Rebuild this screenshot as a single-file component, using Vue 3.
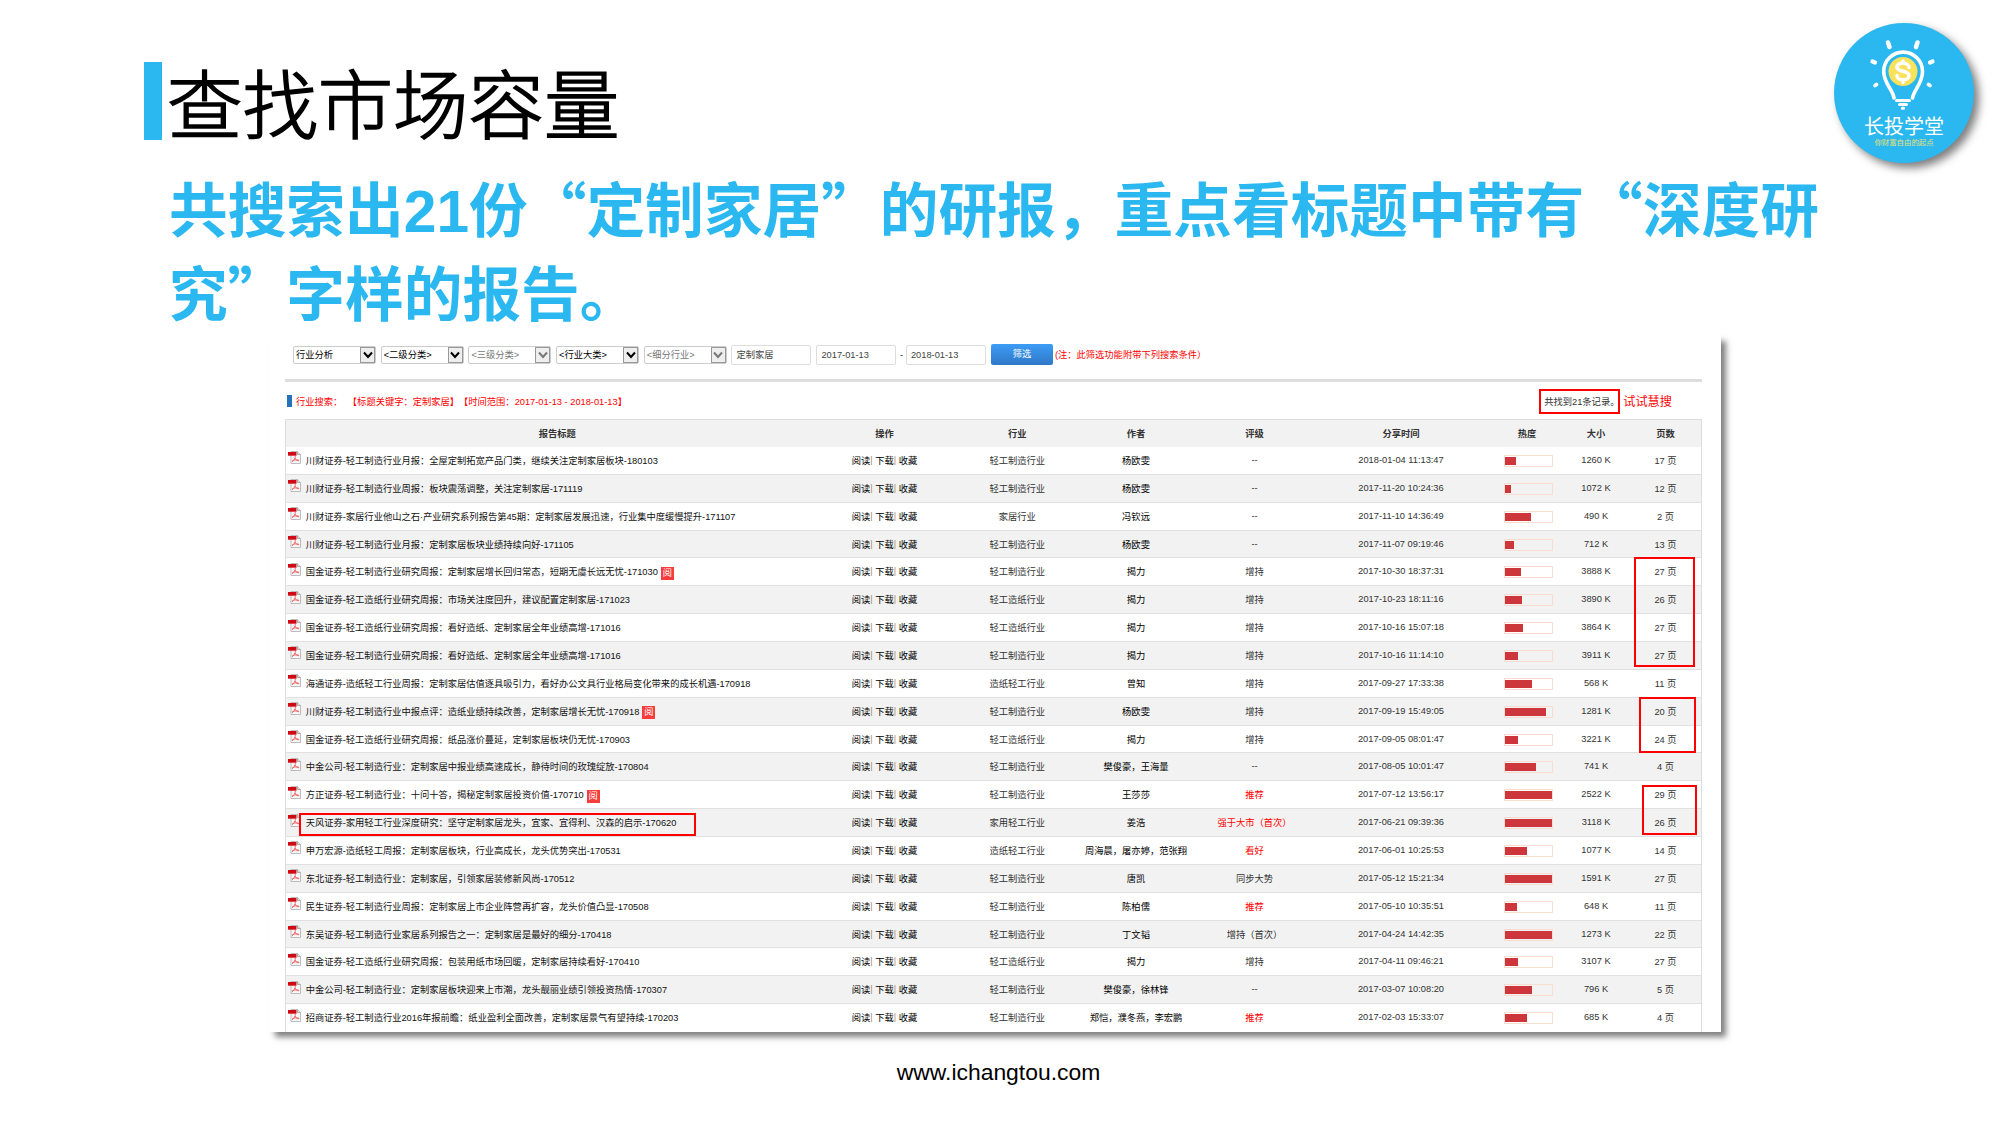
<script setup>
const selects = [
  { text: '行业分析', off: false },
  { text: '<二级分类>', off: false },
  { text: '<三级分类>', off: true },
  { text: '<行业大类>', off: false },
  { text: '<细分行业>', off: true },
]
const heads = ['报告标题', '操作', '行业', '作者', '评级', '分享时间', '热度', '大小', '页数']
const A = '轻工制造行业'
const B = '轻工造纸行业'
// title, industry, authors, rating, shared at, heat (px of 47), size, pages, read flag
const rows = [
  ['川财证券-轻工制造行业月报：全屋定制拓宽产品门类，继续关注定制家居板块-180103', A, '杨欧雯', '--', '2018-01-04 11:13:47', 11, 1260, 17],
  ['川财证券-轻工制造行业周报：板块震荡调整，关注定制家居-171119', A, '杨欧雯', '--', '2017-11-20 10:24:36', 6, 1072, 12],
  ['川财证券-家居行业他山之石·产业研究系列报告第45期：定制家居发展迅速，行业集中度缓慢提升-171107', '家居行业', '冯钦远', '--', '2017-11-10 14:36:49', 26, 490, 2],
  ['川财证券-轻工制造行业月报：定制家居板块业绩持续向好-171105', A, '杨欧雯', '--', '2017-11-07 09:19:46', 9, 712, 13],
  ['国金证券-轻工制造行业研究周报：定制家居增长回归常态，短期无虞长远无忧-171030', A, '揭力', '增持', '2017-10-30 18:37:31', 16, 3888, 27, true],
  ['国金证券-轻工造纸行业研究周报：市场关注度回升，建议配置定制家居-171023', B, '揭力', '增持', '2017-10-23 18:11:16', 17, 3890, 26],
  ['国金证券-轻工造纸行业研究周报：看好造纸、定制家居全年业绩高增-171016', B, '揭力', '增持', '2017-10-16 15:07:18', 18, 3864, 27],
  ['国金证券-轻工制造行业研究周报：看好造纸、定制家居全年业绩高增-171016', A, '揭力', '增持', '2017-10-16 11:14:10', 13, 3911, 27],
  ['海通证券-造纸轻工行业周报：定制家居估值逐具吸引力，看好办公文具行业格局变化带来的成长机遇-170918', '造纸轻工行业', '曾知', '增持', '2017-09-27 17:33:38', 27, 568, 11],
  ['川财证券-轻工制造行业中报点评：造纸业绩持续改善，定制家居增长无忧-170918', A, '杨欧雯', '增持', '2017-09-19 15:49:05', 41, 1281, 20, true],
  ['国金证券-轻工造纸行业研究周报：纸品涨价蔓延，定制家居板块仍无忧-170903', B, '揭力', '增持', '2017-09-05 08:01:47', 13, 3221, 24],
  ['中金公司-轻工制造行业：定制家居中报业绩高速成长，静待时间的玫瑰绽放-170804', A, '樊俊豪，王海量', '--', '2017-08-05 10:01:47', 31, 741, 4],
  ['方正证券-轻工制造行业：十问十答，揭秘定制家居投资价值-170710', A, '王莎莎', '推荐', '2017-07-12 13:56:17', 47, 2522, 29, true],
  ['天风证券-家用轻工行业深度研究：坚守定制家居龙头，宜家、宜得利、汉森的启示-170620', '家用轻工行业', '姜浩', '强于大市（首次）', '2017-06-21 09:39:36', 47, 3118, 26],
  ['申万宏源-造纸轻工周报：定制家居板块，行业高成长，龙头优势突出-170531', '造纸轻工行业', '周海晨，屠亦婷，范张翔', '看好', '2017-06-01 10:25:53', 22, 1077, 14],
  ['东北证券-轻工制造行业：定制家居，引领家居装修新风尚-170512', A, '唐凯', '同步大势', '2017-05-12 15:21:34', 47, 1591, 27],
  ['民生证券-轻工制造行业周报：定制家居上市企业阵营再扩容，龙头价值凸显-170508', A, '陈柏儒', '推荐', '2017-05-10 10:35:51', 12, 648, 11],
  ['东吴证券-轻工制造行业家居系列报告之一：定制家居是最好的细分-170418', A, '丁文韬', '增持（首次）', '2017-04-24 14:42:35', 47, 1273, 22],
  ['国金证券-轻工造纸行业研究周报：包装用纸市场回暖，定制家居持续看好-170410', B, '揭力', '增持', '2017-04-11 09:46:21', 13, 3107, 27],
  ['中金公司-轻工制造行业：定制家居板块迎来上市潮，龙头靓丽业绩引领投资热情-170307', A, '樊俊豪，徐林锋', '--', '2017-03-07 10:08:20', 27, 796, 5],
  ['招商证券-轻工制造行业2016年报前瞻：纸业盈利全面改善，定制家居景气有望持续-170203', A, '郑恺，濮冬燕，李宏鹏', '推荐', '2017-02-03 15:33:07', 22, 685, 4],
]
const isRed = (r) => ['推荐', '看好', '强于大市（首次）'].includes(r)
</script>

<template>
  <main class="slide" lang="zh-CN">
    <header class="top">
      <h1><i class="accent"></i><span>查找市场容量</span></h1>
      <p class="lead">共搜索出<span class="num">21</span>份“定制家居”的研报，重点看标题中带有“深度研<br />究”字样的报告。</p>
    </header>

    <div class="logo">
      <svg viewBox="0 0 140 140" width="140" height="140">
        <circle cx="69" cy="48.5" r="14.5" fill="#fbe25c" />
        <g fill="none" stroke="#fff" stroke-linecap="round">
          <path d="M60 75C59 66.500 49.700 60.500 49.700 48.500a19.400 19.400 0 0 1 38.800 0C88.500 60.500 80 66.500 78.500 75" stroke-width="3.600" />
          <path d="M62.500 77.500h13M65.500 81.500h7M68.300 85.200h1.400" stroke-width="3" />
          <path d="M54 19.500l1.500 4.500M83.500 19.500l-1.500 4.500" stroke-width="4.500" />
          <path d="M38.500 38.500l2.500 1M98.500 38.500l-2.500 1" stroke-width="4.200" />
          <path d="M42.500 61.500l-1.500 1M94.500 61.500l1.500 1" stroke-width="3.800" />
          <path d="M75 44.500c0-2.500-2.500-4.500-6-4.500s-6 2-6 4.300c0 5 12 3 12 8.200 0 2.500-2.500 4.500-6 4.500s-6-2-6-4.500M69 38v1.500M69 57.500v2" stroke-width="3.600" />
        </g>
      </svg>
      <b>长投学堂</b>
      <small>你财富自由的起点</small>
    </div>

    <section class="panel">
      <div class="filters">
        <div v-for="s in selects" :key="s.text" class="select" :class="{ off: s.off }">
          <span>{{ s.text }}</span>
          <i><svg viewBox="0 0 14 16" width="14" height="16"><path d="M3 5.500l4 4.500 4-4.500" fill="none" stroke="currentColor" stroke-width="2" /></svg></i>
        </div>
        <div class="input">定制家居</div>
        <div class="input">2017-01-13</div>
        <span class="dash">-</span>
        <div class="input">2018-01-13</div>
        <div class="button">筛选</div>
        <span class="note">(注：此筛选功能附带下列搜索条件）</span>
      </div>

      <div class="summary">
        <i class="mark"></i>
        <span>行业搜索：</span>
        <span class="query">【标题关键字：定制家居】【时间范围：2017-01-13 - 2018-01-13】</span>
        <span class="count">共找到21条记录。</span>
        <span class="try">试试慧搜</span>
      </div>

      <div class="table">
        <div class="row head">
          <div v-for="(h, i) in heads" :key="h" :class="'c' + i">{{ h }}</div>
        </div>
        <div v-for="(r, i) in rows" :key="i" class="row">
          <div class="c0 title">
            <svg class="pdf" viewBox="0 0 13 13" width="13" height="13">
              <path d="M3 .5h6.500l3 3v9h-9.500z" fill="#f7f7f7" stroke="#b5b5b5" stroke-width=".9" />
              <path d="M9.500.5v3h3" fill="#ddd" stroke="#999" stroke-width=".8" />
              <path d="M4 10.500c2-1 3.500-3.500 3.300-5.500M7 7c.8 2 2.300 3 4.200 2.700M4 10.500c1-1.500 4-2 6.500-1.500" fill="none" stroke="#ee5a5a" stroke-width=".9" />
              <path d="M0 1h8.500v3.700h-8.500z" fill="#d00a12" />
            </svg>
            <span>{{ r[0] }}</span>
            <em v-if="r[8]">阅</em>
          </div>
          <div class="c1 ops">阅读<s>|</s> 下载<s>|</s> 收藏</div>
          <div class="c2">{{ r[1] }}</div>
          <div class="c3">{{ r[2] }}</div>
          <div class="c4" :class="{ red: isRed(r[3]) }">{{ r[3] }}</div>
          <div class="c5">{{ r[4] }}</div>
          <div class="c6"><div class="heat"><i :style="{ width: r[5] + 'px' }"></i></div></div>
          <div class="c7">{{ r[6] }} K</div>
          <div class="c8">{{ r[7] }} 页</div>
        </div>
      </div>

      <i class="box b1"></i>
      <i class="box b2"></i>
      <i class="box b3"></i>
      <i class="box b4"></i>
    </section>

    <footer>www.ichangtou.com</footer>
  </main>
</template>

<style>
body {
  margin: 0;
  background: #fff;
  overflow: hidden;
}
</style>

<style scoped>
* {
  box-sizing: border-box;
}
i,
em {
  font-style: normal;
}
.slide {
  position: relative;
  width: 2000px;
  height: 1125px;
  padding-top: 62px;
  overflow: hidden;
  display: flex;
  flex-direction: column;
  background: #fff;
  font-family: 'Liberation Sans', 'Noto Sans CJK SC', sans-serif;
  text-spacing-trim: space-all;
}
.top {
  height: 272px;
  padding-left: 144px;
}
h1 {
  margin: 0;
  display: flex;
  height: 78px;
  font: 300 75.400px/78px 'Noto Sans CJK SC', sans-serif;
  color: #000;
}
h1 span {
  margin: 0 0 0 5px;
  -webkit-text-stroke: 1.600px #000;
}
.accent {
  width: 18px;
  background: #2bb8f0;
}
.lead {
  margin: 25px 0 0 25px;
  font-size: 58.700px;
  font-weight: 700;
  line-height: 84.300px;
  white-space: nowrap;
  color: #2bb8f0;
  font-family: 'Noto Sans CJK SC', sans-serif;
}
.num {
  font-family: 'Liberation Sans', sans-serif;
  line-height: 1;
}
.logo {
  position: absolute;
  left: 1834px;
  top: 22.500px;
  width: 140px;
  height: 140px;
  border-radius: 50%;
  background: #2bb8f0;
  box-shadow: 5px 5px 8px rgba(0, 0, 0, 0.5);
  text-align: center;
  font-family: 'Noto Sans CJK SC', sans-serif;
}
.logo svg {
  position: absolute;
  left: 0;
  top: 0;
}
.logo b {
  display: block;
  margin-top: 90px;
  font-size: 20px;
  line-height: 26px;
  font-weight: 400;
  color: #fff;
}
.logo small {
  display: block;
  font-size: 7.400px;
  line-height: 8px;
  margin-top: -1px;
  color: #e8e070;
}
.panel {
  position: relative;
  width: 1453px;
  height: 698px;
  margin-left: 268px;
  padding: 10px 19px 0 17px;
  background: #fff;
  box-shadow: 6px 6px 6px -1px rgba(0, 0, 0, 0.5);
  font-size: 9.270px;
  color: #333;
  white-space: nowrap;
}
.filters {
  display: flex;
  align-items: center;
  height: 21px;
  padding-left: 8px;
}
.select {
  display: flex;
  justify-content: space-between;
  width: 83px;
  height: 18px;
  margin-right: 4.700px;
  padding-left: 2px;
  border: 1px solid #ccc;
  border-radius: 2px;
  line-height: 16px;
  color: #000;
}
.select i {
  width: 15px;
  height: 16px;
  border: 1px solid #999;
  background: #eee;
}
.select i svg {
  display: block;
  margin: -1px 0 0 -0.500px;
}
.select.off {
  color: #777;
}
.input {
  width: 80px;
  height: 20px;
  margin-right: 5px;
  padding-left: 4px;
  border: 1px solid #ddd;
  border-radius: 2px;
  line-height: 18px;
  color: #444;
}
.dash {
  width: 4px;
  margin: 0 2px 0 -1.500px;
}
.button {
  width: 62px;
  height: 21px;
  border-radius: 2px;
  background: linear-gradient(#3d9cf5, #2f78c8);
  color: #fff;
  text-align: center;
  line-height: 20px;
}
.note {
  margin: -1px 0 0 2px;
  color: #f00;
}
.summary {
  display: flex;
  align-items: center;
  height: 40px;
  margin-top: 14px;
  border-top: 3px solid #ddd;
  color: #f00;
}
.mark {
  width: 5px;
  height: 12px;
  margin: 0 4.500px 0 1.500px;
  background: #2672ba;
}
.query {
  margin-left: 5.500px;
}
.count {
  width: 81px;
  height: 25px;
  margin: 2px 0 0 auto;
  padding-left: 3px;
  border: 2px solid #f00;
  line-height: 22px;
  color: #333;
}
.try {
  margin: 0 30px 0 3px;
  font-size: 12.200px;
}
.table {
  border: 1px solid #ddd;
  border-bottom: 0;
}
.row {
  display: grid;
  grid-template-columns: 532.500px 132px 133.500px 104px 133px 160px 81px 68px 71px;
  height: 27.870px;
  border-bottom: 1px solid #e0e0e0;
}
.row > div {
  display: flex;
  align-items: center;
  justify-content: center;
  padding-bottom: 1px;
  white-space: pre;
}
.row:nth-child(odd) {
  background: #f2f2f2;
}
.row:last-child {
  border-bottom: 0;
  padding-bottom: 1px;
}
.head {
  height: 27px;
  border-bottom: 0;
  font-weight: 700;
}
.head .c0 {
  padding-left: 10px;
}
.row > .c6 {
  padding-left: 13px;
  padding-bottom: 0;
}
.row.head > .c6 {
  padding-left: 11px;
  padding-bottom: 1px;
}
.row > .title {
  justify-content: flex-start;
  padding-left: 2px;
  color: #111;
}
.title span {
  margin-left: 4.700px;
}
.pdf {
  margin-top: -4px;
}
.title em {
  width: 13px;
  height: 13px;
  margin: 4px 0 0 3px;
  background: #f73c3c;
  color: #fff;
  line-height: 12px;
  text-align: center;
}
.ops,
.c3 {
  color: #000;
}
.head > div {
  color: #333;
}
.ops s {
  text-decoration: none;
  color: #a98a70;
}
.row > .red {
  color: #f00;
}
.heat {
  width: 49px;
  height: 12px;
  margin-top: 1px;
  padding: 1px 0;
  border: 1px solid #f8ddd0;
}
.heat i {
  display: block;
  height: 8px;
  background: #cd373b;
}
.box {
  position: absolute;
  border: 2px solid #f00;
}
.b1 {
  left: 31px;
  top: 479px;
  width: 397px;
  height: 23px;
}
.b2 {
  left: 1366px;
  top: 223px;
  width: 61px;
  height: 110px;
}
.b3 {
  left: 1371px;
  top: 363px;
  width: 57px;
  height: 56px;
}
.b4 {
  left: 1374px;
  top: 451px;
  width: 55px;
  height: 50px;
}
footer {
  margin: 27px 3px 0 0;
  text-align: center;
  font: 22.900px/26px 'Liberation Sans', sans-serif;
  color: #000;
}
</style>
